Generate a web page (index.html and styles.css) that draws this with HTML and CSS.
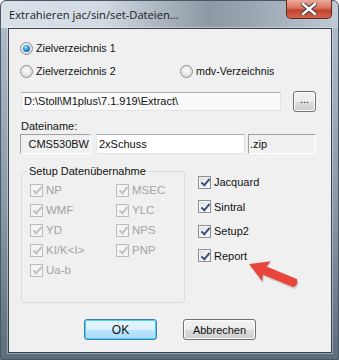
FILE: index.html
```html
<!DOCTYPE html>
<html lang="de">
<head>
    <meta charset="UTF-8">
    <title>Extrahieren jac/sin/set-Dateien...</title>
    <link rel="stylesheet" href="styles.css">
</head>
<body>
    <div class="window">
        <div class="titlebar">
            <span class="title">Extrahieren jac/sin/set-Dateien...</span>
            <div class="close">
                <svg width="16" height="12" viewBox="0 0 16 12">
                    <path d="M2 1 L14 11 M14 1 L2 11" stroke="#3b3b3b" stroke-width="4.4" stroke-linecap="square"/>
                    <path d="M2 1 L14 11 M14 1 L2 11" stroke="#ffffff" stroke-width="2.4" stroke-linecap="square"/>
                </svg>
            </div>
        </div>

        <div class="client">
            <div class="row">
                <label class="radio checked"><span class="circle"></span>Zielverzeichnis 1</label>
            </div>
            <div class="row row2">
                <label class="radio first"><span class="circle"></span>Zielverzeichnis 2</label>
                <label class="radio"><span class="circle"></span>mdv-Verzeichnis</label>
            </div>

            <div class="path-row">
                <div class="field path">D:\Stoll\M1plus\7.1.919\Extract\</div>
                <button class="btn browse">...</button>
            </div>

            <div class="caption">Dateiname:</div>
            <div class="name-row">
                <div class="field ro prefix">CMS530BW</div>
                <div class="field edit">2xSchuss</div>
                <div class="field ro ext">.zip</div>
            </div>

            <div class="mid">
                <fieldset class="group">
                    <legend>Setup Datenübernahme</legend>
                    <div class="grid">
                        <label class="check disabled"><span class="box"></span>NP</label>
                        <label class="check disabled"><span class="box"></span>MSEC</label>
                        <label class="check disabled"><span class="box"></span>WMF</label>
                        <label class="check disabled"><span class="box"></span>YLC</label>
                        <label class="check disabled"><span class="box"></span>YD</label>
                        <label class="check disabled"><span class="box"></span>NPS</label>
                        <label class="check disabled"><span class="box"></span>KI/K&lt;I&gt;</label>
                        <label class="check disabled"><span class="box"></span>PNP</label>
                        <label class="check disabled"><span class="box"></span>Ua-b</label>
                    </div>
                </fieldset>
                <div class="checks">
                    <label class="check"><span class="box"></span>Jacquard</label>
                    <label class="check"><span class="box"></span>Sintral</label>
                    <label class="check"><span class="box"></span>Setup2</label>
                    <label class="check"><span class="box"></span>Report</label>
                </div>
            </div>

            <div class="buttons">
                <button class="btn default">OK</button>
                <button class="btn">Abbrechen</button>
            </div>
        </div>

        <!-- red annotation arrow -->
        <svg class="arrow" width="339" height="360" viewBox="0 0 339 360">
            <g transform="translate(248 263) rotate(22.6)">
                <path d="M0 0 L19 -11 L17 -4.5 L50 -4.5 Q54 0 50 4.5 L17 4.5 L19 11 Z" fill="#000" opacity="0.12" transform="translate(1.5 1.5)"/>
                <path d="M0 0 L19 -11 L17 -4.5 L50 -4.5 Q54 0 50 4.5 L17 4.5 L19 11 Z" fill="#e8453c"/>
            </g>
        </svg>
    </div>
</body>
</html>
```

FILE: styles.css
```css
body {
    margin: 0;
    background: #ffffff;
    font-family: "Liberation Sans", Arial, sans-serif;
    font-size: 11px;
    color: #111;
}
.window {
    position: relative;
    width: 339px;
    height: 360px;
    box-sizing: border-box;
    padding: 0 6px 7px 7px;
    border: 1px solid #4b5864;
    border-radius: 6px 6px 0 0;
    background: linear-gradient(to bottom, #b4c0cb 0%, #8796a5 60%, #5c6d7e 100%);
}
.titlebar {
    height: 27px;
    margin: 0 -6px 0 -7px;
    padding: 0 6px 0 8px;
    display: flex;
    align-items: flex-start;
    justify-content: space-between;
    border-radius: 6px 6px 0 0;
    background: linear-gradient(to right, #d9e1e9 0%, #d2dbe3 30%, #b0bac4 45%, #8d99a5 62%, #9aa6b2 75%, #c0cad4 100%);
}
.title {
    font-family: "Open Sans", sans-serif;
    font-size: 11.2px;
    line-height: 16px;
    padding-top: 6px;
    color: #1a1a1a;
}
.close {
    width: 46px;
    height: 19px;
    box-sizing: border-box;
    border: 1px solid #5a2a22;
    border-top: none;
    border-radius: 0 0 5px 5px;
    background: linear-gradient(to bottom, #eaaa9c 0%, #d9735f 45%, #c2432d 55%, #d3624c 100%);
    display: flex;
    align-items: center;
    justify-content: center;
    margin-top: -1px;
}
.client {
    height: 325px;
    box-sizing: border-box;
    background: #f0f0f0;
    border: 1px solid #38424c;
    box-shadow: 0 0 0 1px rgba(255, 255, 255, 0.35);
    padding: 12px 0 0 11px;
}
.row {
    display: flex;
    height: 14px;
}
.row2 {
    margin-top: 9px;
}
.radio, .check {
    display: flex;
    align-items: center;
    gap: 3px;
    height: 14px;
    line-height: 14px;
}
.radio {
    font-size: 10.7px;
}
.radio.first {
    width: 160px;
}
.circle {
    width: 13px;
    height: 13px;
    box-sizing: border-box;
    border-radius: 50%;
    border: 1px solid #8c8f93;
    background: radial-gradient(circle at 50% 40%, #fdfdfd 0%, #e8e8e8 50%, #cfd0d2 100%);
    display: flex;
    align-items: center;
    justify-content: center;
}
.checked .circle::after {
    content: "";
    width: 7px;
    height: 7px;
    border-radius: 50%;
    background: radial-gradient(circle at 40% 35%, #9ee2fb 0%, #2a8fd6 45%, #0e4f8c 100%);
}
.path-row {
    display: flex;
    align-items: center;
    height: 21px;
    margin-top: 13px;
}
.field {
    box-sizing: border-box;
    height: 19px;
    line-height: 17px;
    white-space: nowrap;
    overflow: hidden;
}
.path {
    width: 260px;
    flex: none;
    margin-left: 1px;
    padding-left: 2px;
    background: #fafafa;
    border: 1px solid #e2e3ea;
    border-top-color: #abadb3;
}
.caption {
    margin-top: 8px;
    line-height: 13px;
    padding-left: 1px;
}
.name-row {
    display: flex;
    margin-top: 1px;
    height: 20px;
}
.name-row .field {
    height: 20px;
    line-height: 18px;
}
.ro {
    background: #f0f0f0;
    border: 1px solid;
    border-color: #a0a0a0 #ffffff #ffffff #a0a0a0;
}
.prefix {
    width: 71px;
    text-align: right;
    padding-right: 1px;
}
.edit {
    width: 149px;
    margin-left: 5px;
    padding-left: 2px;
    background: #ffffff;
    border: 1px solid #e2e3ea;
    border-top-color: #abadb3;
}
.ext {
    width: 68px;
    margin-left: 3px;
    padding-left: 1px;
}
.mid {
    display: flex;
    align-items: flex-start;
    margin-top: 11px;
}
.group {
    width: 164px;
    height: 138px;
    box-sizing: border-box;
    margin: 0 0 0 1px;
    padding: 2px 0 0 0;
    border: 1px solid #d5dfe5;
    border-radius: 3px;
    min-inline-size: 0;
}
.group legend {
    margin-left: 5px;
    padding: 0 2px;
    line-height: 13px;
}
.grid {
    display: grid;
    grid-template-columns: 86px 60px;
    grid-auto-rows: 20px;
    align-items: center;
    margin-left: 8px;
}
.box {
    width: 13px;
    height: 13px;
    box-sizing: border-box;
    border: 1px solid #8e8f8f;
    background: linear-gradient(135deg, #dcdcdc 0%, #f4f4f4 60%, #ffffff 100%);
    box-shadow: inset 0 0 0 1px #f4f4f4;
    position: relative;
}
.box::after {
    content: "";
    position: absolute;
    left: 3.5px;
    top: 0.5px;
    width: 3px;
    height: 7px;
    border: solid #3c5387;
    border-width: 0 2px 2px 0;
    transform: rotate(40deg);
}
.disabled {
    color: #a3a3a3;
    font-size: 11.5px;
}
.disabled .box {
    border-color: #bcbcbc;
    background: #f4f4f4;
}
.disabled .box::after {
    border-color: #c2c2c2;
}
.checks {
    display: flex;
    flex-direction: column;
    gap: 10.6px;
    margin-left: 13px;
    margin-top: 10px;
}
.buttons {
    display: flex;
    gap: 26px;
    margin-top: 16px;
    padding-left: 64px;
}
.btn {
    font-family: "Liberation Sans", Arial, sans-serif;
    font-size: 11px;
    color: #111;
    box-sizing: border-box;
    width: 73px;
    height: 21px;
    border: 1px solid #707070;
    border-radius: 3px;
    background: linear-gradient(to bottom, #f2f2f2 0%, #ebebeb 50%, #dddddd 51%, #cfcfcf 100%);
    box-shadow: inset 0 0 0 1px #fcfcfc;
    padding: 0;
}
.btn.default {
    border-color: #3c7fb1;
    background: linear-gradient(to bottom, #eaf6fd 0%, #d9f0fc 50%, #bee6fd 51%, #a7d9f5 100%);
    box-shadow: inset 0 0 0 1px #48d2f4;
    font-size: 12px;
}
.btn.browse {
    flex: none;
    width: 23px;
    height: 21px;
    margin-left: 12px;
    line-height: 10px;
    padding: 0 0 6px;
}
.arrow {
    position: absolute;
    left: 0;
    top: 0;
    pointer-events: none;
}
```
